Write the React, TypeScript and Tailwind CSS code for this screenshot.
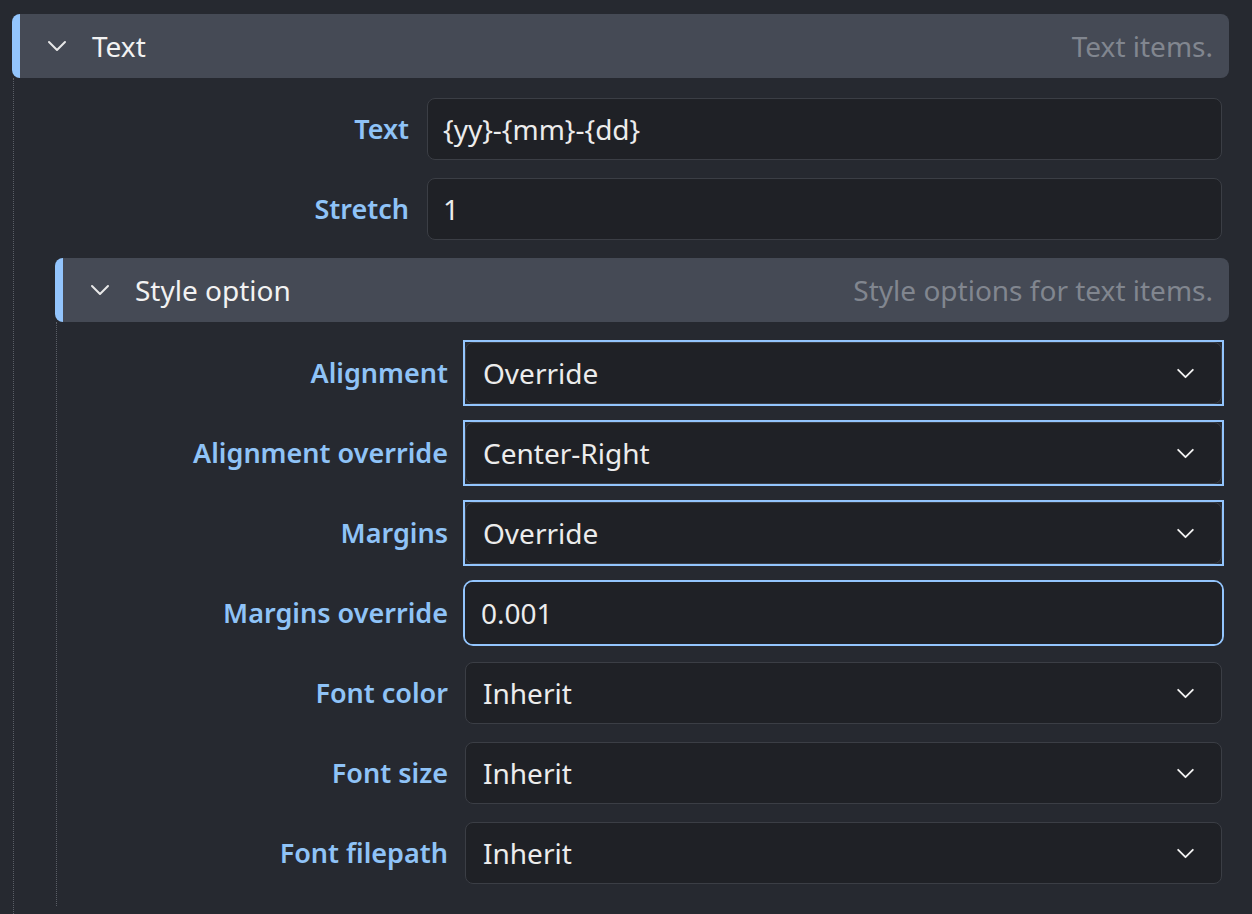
import { ReactNode } from "react";

const FONT = { fontFamily: '"Noto Sans", "Open Sans", sans-serif' };

function Chevron({ className }: { className?: string }) {
  return (
    <svg viewBox="0 0 20 12" fill="none" aria-hidden className={className}>
      <path
        d="M2 2l8 8 8-8"
        stroke="currentColor"
        strokeWidth="2"
        strokeLinecap="round"
        strokeLinejoin="round"
      />
    </svg>
  );
}

type SectionProps = {
  title: string;
  description: string;
  children: ReactNode;
  nested?: boolean;
};

function Section({ title, description, children, nested }: SectionProps) {
  return (
    <section>
      <div className="h-[64px] flex items-center rounded-lg border-l-[8px] border-[#93c5fd] bg-[#454a55] pl-[27px] pr-[16px]">
        <Chevron className="w-[20px] h-[12px] text-[#e8e8e8] shrink-0" />
        <span className="ml-[25px] text-[28px] text-[#f2f2f2]">{title}</span>
        <span className="ml-auto text-[28px] text-[#81868f]">{description}</span>
      </div>
      <div
        className={
          nested
            ? "ml-px border-l border-dotted border-[#5a5e66] pl-[41px] pt-[18px] pb-[20px] flex flex-col gap-[14px]"
            : "ml-px border-l border-dotted border-[#5a5e66] pl-[41px] pt-[20px] pb-[20px] flex flex-col gap-[18px]"
        }
      >
        {children}
      </div>
    </section>
  );
}

function TextRow({ label, value }: { label: string; value: string }) {
  return (
    <div className="flex items-center pr-[7px]">
      <label className="w-[354px] shrink-0 text-right text-[27px] font-semibold text-[#8fc3f7]">
        {label}
      </label>
      <div className="ml-[18px] flex-1 h-[62px] flex items-center rounded-lg border border-[#3b3e45] bg-[#1f2126] px-[15px] text-[28px] text-[#ececec]">
        {value}
      </div>
    </div>
  );
}

type FieldProps = {
  label: string;
  value: string;
  select?: boolean;
  highlight?: "square" | "focus";
};

function Field({ label, value, select = true, highlight }: FieldProps) {
  const wrap =
    highlight === "square"
      ? "border-2 border-[#93c5fd]"
      : highlight === "focus"
        ? "border-2 border-[#93c5fd] rounded-[10px]"
        : "border-2 border-transparent";
  return (
    <div className="flex items-center pr-[5px]">
      <label className="w-[350px] shrink-0 text-right text-[27px] font-semibold text-[#8fc3f7]">
        {label}
      </label>
      <div className={`ml-[15px] flex-1 h-[66px] ${wrap}`}>
        <div
          className={
            highlight === "focus"
              ? "h-full flex items-center rounded-lg bg-[#1f2126] pl-[16px] pr-[26px] text-[28px] text-[#ececec]"
              : "h-full flex items-center rounded-lg border border-[#3b3e45] bg-[#1f2126] pl-[17px] pr-[26px] text-[28px] text-[#ececec]"
          }
        >
          <span>{value}</span>
          {select ? (
            <Chevron className="ml-auto w-[19px] h-[11px] text-[#f2f2f2]" />
          ) : null}
        </div>
      </div>
    </div>
  );
}

export default function App() {
  return (
    <div style={FONT} className="w-full h-[914px] overflow-hidden bg-[#262930] pt-[14px] pl-[12px] pr-[23px]">
      <Section title="Text" description="Text items.">
        <TextRow label="Text" value="{yy}-{mm}-{dd}" />
        <TextRow label="Stretch" value="1" />
        <Section nested title="Style option" description="Style options for text items.">
          <Field label="Alignment" value="Override" highlight="square" />
          <Field label="Alignment override" value="Center-Right" highlight="square" />
          <Field label="Margins" value="Override" highlight="square" />
          <Field label="Margins override" value="0.001" select={false} highlight="focus" />
          <Field label="Font color" value="Inherit" />
          <Field label="Font size" value="Inherit" />
          <Field label="Font filepath" value="Inherit" />
        </Section>
      </Section>
    </div>
  );
}
